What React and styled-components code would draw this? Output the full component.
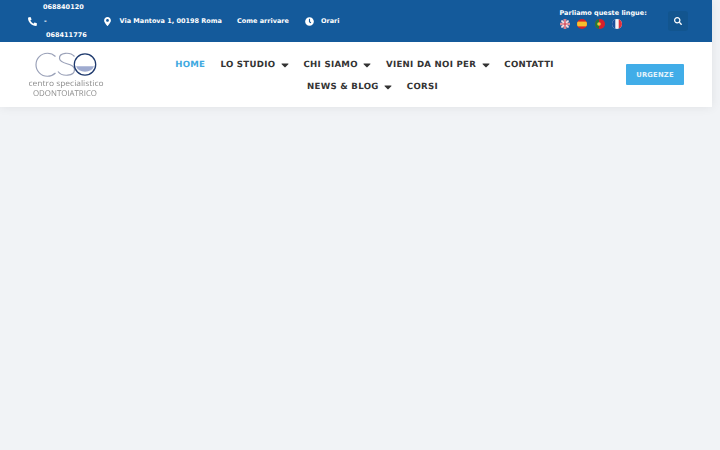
import React from 'react'
import styled, { createGlobalStyle } from 'styled-components'
import { FaPhoneAlt, FaMapMarkerAlt, FaClock, FaSearch, FaCaretDown } from 'react-icons/fa'

const Global = createGlobalStyle`
  html, body {
    margin: 0;
    background: #f1f3f6;
    font-family: "DejaVu Sans", Verdana, sans-serif;
    text-rendering: geometricPrecision;
  }
`

const Page = styled.div`
  width: 720px;
  height: 450px;
  overflow: hidden;
  background: #f1f3f6;
`

const Header = styled.header`
  width: 712px;
  box-shadow: 0 0 10px rgba(0, 0, 0, 0.08);
`

const TopBar = styled.div`
  height: 42px;
  background: #145a9b;
  display: flex;
  align-items: center;
  padding-left: 28px;
  color: #fff;
  font-size: 6.5px;
  font-weight: 700;
`

const InfoItem = styled.div`
  display: flex;
  align-items: center;
  gap: ${p => p.$gap || 8}px;
  margin-right: ${p => p.$right || 0}px;
  white-space: nowrap;
`

const Phones = styled.div`
  line-height: 14px;
  width: 44px;
`

const PhoneLine = styled.div`
  padding-left: ${p => p.$indent || 0}px;
`

const Languages = styled.div`
  margin-left: 220px;
  width: 100px;
  padding-bottom: 6px;
`

const LangLabel = styled.div`
  line-height: 10px;
  margin-bottom: 1px;
  white-space: nowrap;
`

const Flags = styled.div`
  display: flex;
  gap: 7.6px;
`

const Flag = styled.svg`
  width: 10px;
  height: 10px;
  display: block;
`

const SearchBtn = styled.div`
  width: 20px;
  height: 20px;
  margin-left: 8px;
  border-radius: 3px;
  background: #12558f;
  display: flex;
  align-items: center;
  justify-content: center;
  font-size: 8px;
`

const MainBar = styled.div`
  height: 65px;
  background: #fff;
  display: flex;
  align-items: center;
  padding-left: 28px;
`

const LogoWrap = styled.svg`
  width: 76px;
  height: 46px;
  flex: none;
  display: block;
`

const LogoText = styled.text`
  font-family: "Open Sans", sans-serif;
  font-size: 8px;
  fill: #8c8c8c;
  filter: grayscale(1);
`

const Nav = styled.nav`
  width: 420px;
  margin-left: 50.5px;
  padding-top: 2px;
  display: flex;
  flex-wrap: wrap;
  justify-content: center;
  column-gap: 15.2px;
`

const NavItem = styled.a`
  display: flex;
  align-items: center;
  gap: 6px;
  height: 22px;
  margin-left: ${p => p.$shift || 0}px;
  font-size: 8.6px;
  font-weight: 700;
  letter-spacing: 0.3px;
  color: ${p => (p.$active ? '#3fa9e0' : '#333333')};
  white-space: nowrap;
  svg {
    font-size: 12px;
    margin: 0 -2.5px;
  }
`

const Urgent = styled.a`
  margin-left: 51.5px;
  width: 58px;
  height: 21px;
  background: #41ade8;
  border-radius: 1px;
  display: flex;
  align-items: center;
  justify-content: center;
  color: #e4f3fb;
  font-size: 6.8px;
  font-weight: 700;
  letter-spacing: 0.2px;
`

const Logo = () => (
  <LogoWrap viewBox="0 0 76 46">
    <path d="M27.5 4.5 A11.5 11.5 0 1 0 27.5 21" fill="none" stroke="#9aa1b8" strokeWidth="1.2" />
    <path d="M46.5 4.5 C42 -0.5 31 0.5 31.5 6.5 C32 13 46.5 10.5 46.5 17.5 C46.5 24.5 34 25 30 19.5" fill="none" stroke="#9aa1b8" strokeWidth="1.2" />
    <path d="M48 14.2 H66 A9.5 8 0 0 1 48 14.2 Z" fill="#9fabd0" />
    <circle cx="57" cy="12.5" r="10.7" fill="none" stroke="#1f3a6e" strokeWidth="1.3" />
    <LogoText x="38" y="34" textAnchor="middle" textLength="75" lengthAdjust="spacingAndGlyphs">centro specialistico</LogoText>
    <LogoText x="37" y="44" textAnchor="middle" textLength="64" lengthAdjust="spacingAndGlyphs">ODONTOIATRICO</LogoText>
  </LogoWrap>
)

const UkFlag = () => (
  <Flag viewBox="0 0 10 10">
    <defs><clipPath id="uk"><circle cx="5" cy="5" r="5" /></clipPath></defs>
    <g clipPath="url(#uk)">
      <rect width="10" height="10" fill="#3b4f8c" />
      <path d="M0 0L10 10M10 0L0 10" stroke="#f4e4e6" strokeWidth="1.6" />
      <path d="M5 0V10M0 5H10" stroke="#f4e4e6" strokeWidth="2.6" />
      <path d="M5 0V10M0 5H10" stroke="#cf3a4b" strokeWidth="1.2" />
    </g>
  </Flag>
)

const EsFlag = () => (
  <Flag viewBox="0 0 10 10">
    <defs><clipPath id="es"><circle cx="5" cy="5" r="5" /></clipPath></defs>
    <g clipPath="url(#es)">
      <rect width="10" height="10" fill="#d8202c" />
      <rect y="2.6" width="10" height="4.8" fill="#f6c02c" />
    </g>
  </Flag>
)

const PtFlag = () => (
  <Flag viewBox="0 0 10 10">
    <defs><clipPath id="pt"><circle cx="5" cy="5" r="5" /></clipPath></defs>
    <g clipPath="url(#pt)">
      <rect width="10" height="10" fill="#d8202c" />
      <rect width="4" height="10" fill="#1f7a3a" />
      <circle cx="4" cy="5" r="1.8" fill="#f0c43a" />
    </g>
  </Flag>
)

const FrFlag = () => (
  <Flag viewBox="0 0 10 10">
    <defs><clipPath id="fr"><circle cx="5" cy="5" r="5" /></clipPath></defs>
    <g clipPath="url(#fr)">
      <rect width="10" height="10" fill="#f5f5f7" />
      <rect width="3.3" height="10" fill="#1b4f9c" />
      <rect x="6.7" width="3.3" height="10" fill="#e0303c" />
    </g>
  </Flag>
)

export default function App() {
  return (
    <Page>
      <Global />
      <Header>
        <TopBar>
          <InfoItem $gap={6} $right={16}>
            <FaPhoneAlt size={9} />
            <Phones>
              <PhoneLine>068840120</PhoneLine>
              <PhoneLine $indent={1}>-</PhoneLine>
              <PhoneLine $indent={3}>068411776</PhoneLine>
            </Phones>
          </InfoItem>
          <InfoItem $gap={7.5} $right={15}>
            <FaMapMarkerAlt size={9} />
            Via Mantova 1, 00198 Roma
          </InfoItem>
          <InfoItem $right={16.5}>Come arrivare</InfoItem>
          <InfoItem $gap={6.5}>
            <FaClock size={9} />
            Orari
          </InfoItem>
          <Languages>
            <LangLabel>Parliamo queste lingue:</LangLabel>
            <Flags>
              <UkFlag />
              <EsFlag />
              <PtFlag />
              <FrFlag />
            </Flags>
          </Languages>
          <SearchBtn><FaSearch /></SearchBtn>
        </TopBar>
        <MainBar>
          <Logo />
          <Nav>
            <NavItem $active>HOME</NavItem>
            <NavItem>LO STUDIO <FaCaretDown /></NavItem>
            <NavItem>CHI SIAMO <FaCaretDown /></NavItem>
            <NavItem>VIENI DA NOI PER <FaCaretDown /></NavItem>
            <NavItem>CONTATTI</NavItem>
            <NavItem $shift={16}>NEWS &amp; BLOG <FaCaretDown /></NavItem>
            <NavItem>CORSI</NavItem>
          </Nav>
          <Urgent>URGENZE</Urgent>
        </MainBar>
      </Header>
    </Page>
  )
}
